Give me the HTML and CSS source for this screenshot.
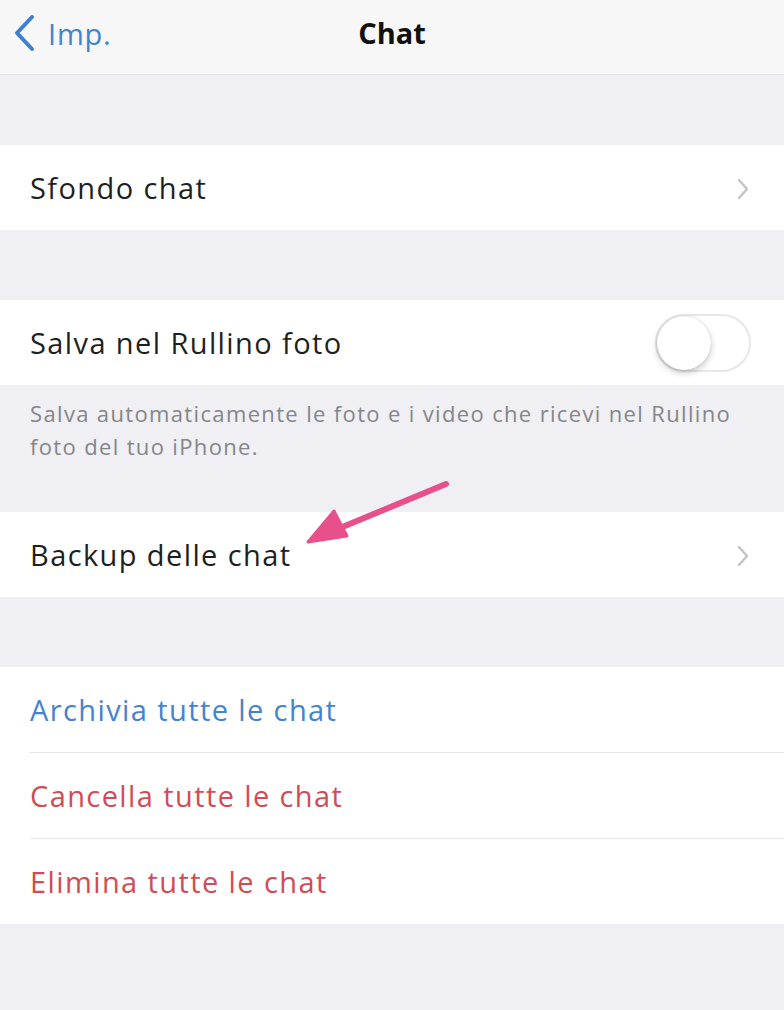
FILE: index.html
```html
<!DOCTYPE html>
<html lang="it">
<head>
    <meta charset="UTF-8">
    <meta name="viewport" content="width=device-width, initial-scale=1.0">
    <title>Chat</title>
    <link rel="stylesheet" href="styles.css">
</head>
<body>
    <div class="nav-bar">
        <div class="back-link">
            <svg class="back-chevron" width="26" height="40" viewBox="0 0 26 40">
                <path d="M20 4 L5 20 L20 36" fill="none" stroke="#3d7fd0" stroke-width="4" stroke-linecap="round" stroke-linejoin="round"/>
            </svg>
            <span>Imp.</span>
        </div>
        <div class="nav-title">Chat</div>
    </div>

    <div class="group">
        <div class="row">
            <span class="row-label">Sfondo chat</span>
            <svg class="chevron" width="14" height="22" viewBox="0 0 14 22">
                <path d="M3 2 L11 11 L3 20" fill="none" stroke="#c4c4c9" stroke-width="2.5" stroke-linecap="round" stroke-linejoin="round"/>
            </svg>
        </div>
    </div>

    <div class="group">
        <div class="row">
            <span class="row-label">Salva nel Rullino foto</span>
            <div class="toggle"><div class="toggle-knob"></div></div>
        </div>
    </div>
    <div class="group-footer">Salva automaticamente le foto e i video che ricevi nel Rullino foto del tuo iPhone.</div>

    <div class="group group-tight">
        <div class="row">
            <span class="row-label">Backup delle chat</span>
            <svg class="chevron" width="14" height="22" viewBox="0 0 14 22">
                <path d="M3 2 L11 11 L3 20" fill="none" stroke="#c4c4c9" stroke-width="2.5" stroke-linecap="round" stroke-linejoin="round"/>
            </svg>
        </div>
    </div>

    <div class="group">
        <div class="row row-action"><span class="row-label blue">Archivia tutte le chat</span></div>
        <div class="row row-action"><span class="row-label red">Cancella tutte le chat</span></div>
        <div class="row row-action"><span class="row-label red">Elimina tutte le chat</span></div>
    </div>

    <svg class="pointer-arrow" width="784" height="1010" viewBox="0 0 784 1010">
        <line x1="446" y1="484" x2="340" y2="528" stroke="#e8508b" stroke-width="6" stroke-linecap="round"/>
        <polygon points="308,542 334,511 347,536" fill="#e8508b" stroke="#e8508b" stroke-width="3" stroke-linejoin="round"/>
    </svg>
</body>
</html>
```

FILE: styles.css
```css
body {
    margin: 0;
    padding: 0 0 85px 0;
    background: #efeff4;
    font-family: "Open Sans", "Liberation Sans", Arial, sans-serif;
    color: #1f1f1f;
    position: relative;
    -webkit-font-smoothing: antialiased;
}
.nav-bar {
    height: 74px;
    background: #f7f7f7;
    border-bottom: 1px solid #e3e3e6;
    display: flex;
    align-items: center;
    justify-content: center;
    position: relative;
}
.back-link {
    position: absolute;
    left: 12px;
    top: 13px;
    display: flex;
    align-items: center;
    gap: 10px;
    color: #4383cf;
    font-size: 29px;
    letter-spacing: 0.8px;
}
.nav-title {
    font-size: 29px;
    font-weight: 700;
    color: #111;
    margin-top: -10px;
}
.group {
    background: #fff;
    margin-top: 70px;
}
.group-tight {
    margin-top: 0;
}
.row {
    height: 85px;
    display: flex;
    align-items: center;
    justify-content: space-between;
    padding: 0 34px 0 30px;
}
.row-label {
    font-size: 29px;
    letter-spacing: 1.4px;
}
.row-action {
    height: 85px;
}
.row-action + .row-action {
    border-top: 1px solid #e6e6e9;
    margin-left: 30px;
    padding-left: 0;
}
.blue {
    color: #4383cf;
}
.red {
    color: #d24b55;
}
.chevron {
    margin-top: 2px;
}
.toggle {
    width: 96px;
    height: 58px;
    border-radius: 29px;
    border: 2px solid #e7e7ea;
    box-sizing: border-box;
    background: #fff;
    margin-right: -1px;
    position: relative;
}
.toggle-knob {
    width: 54px;
    height: 54px;
    border-radius: 50%;
    background: #fff;
    box-shadow: 0 3px 6px rgba(0, 0, 0, 0.22), 0 0 1px rgba(0, 0, 0, 0.25);
}
.group-footer {
    padding: 12px 40px 0 30px;
    height: 127px;
    box-sizing: border-box;
    font-size: 22px;
    line-height: 33px;
    letter-spacing: 1.35px;
    color: #85858a;
}
.pointer-arrow {
    position: absolute;
    top: 0;
    left: 0;
    pointer-events: none;
}
```
